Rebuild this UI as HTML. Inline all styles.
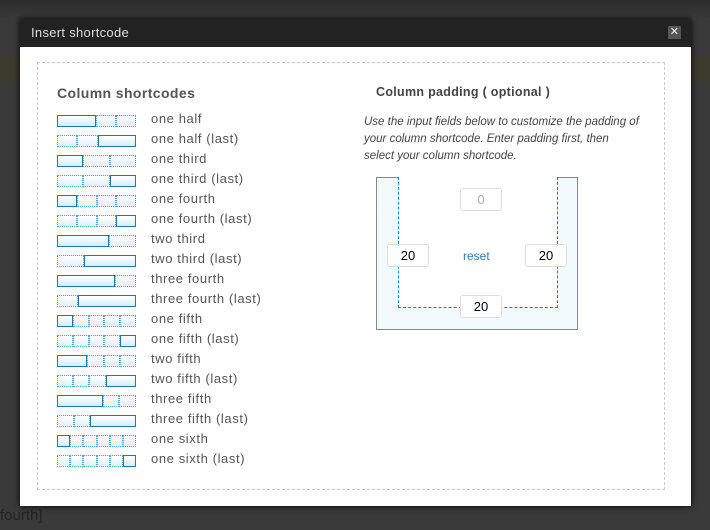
<!DOCTYPE html><html><head><style>
body{margin:0;width:710px;height:530px;background:#3a3a3a;position:relative;overflow:hidden;font-family:"Liberation Sans",sans-serif}
.bg{position:absolute;color:#222;font-size:15px}
#m{position:absolute;left:20px;top:19px;width:671px;height:487px;background:#fff;box-shadow:0 0 6px #000}
#t{height:28px;background:#222;color:#ddd;font-size:13px;line-height:28px;padding-left:11px;letter-spacing:.3px}
#x{position:absolute;right:10px;top:7px;width:13px;height:13px;background:#555;color:#eee;font-size:11px;line-height:13px;text-align:center}
#d{position:absolute;left:17px;top:43px;width:626px;height:426px;border:1px dashed #ccc}
h3{position:absolute;margin:0;font-size:14px;color:#555;font-weight:bold;letter-spacing:.4px}
.row{position:absolute;left:37px;height:12px;width:79px;display:flex;margin-top:1px}
.row div{box-sizing:border-box;height:12px;border:1px dotted #5aa0c8;background:linear-gradient(#fff,#dff1fb)}
.row div.f{border:1px solid #1a7ab0;background:linear-gradient(#fff,#d4edfa)}
.lb{position:absolute;left:131px;font-size:13px;color:#555;letter-spacing:.6px}
#p{position:absolute;left:356px;top:158px;width:200px;height:151px;border:1px solid #888;background:#f1fbfe}
#in{position:absolute;left:21px;top:-1px;width:158px;height:130px;border:1px dashed #0a78c0;border-top:none;background:#fff}
.i{position:absolute;width:40px;height:21px;border:1px solid #ddd;border-radius:3px;background:#fff;font-size:13px;text-align:center;line-height:21px;color:#000}
</style></head><body>
<div class="bg" style="left:0;top:0;width:710px;height:19px;background:linear-gradient(#2c2c2c,#3a3a3a)"></div>
<div class="bg" style="left:0;top:55px;width:20px;height:26px;background:#3b3b2e"></div>
<div class="bg" style="left:691px;top:55px;width:19px;height:26px;background:#3b3b2e"></div>
<div class="bg" style="left:0;top:507px">fourth]</div>
<div id="m">
<div id="t">Insert shortcode<div id="x">✕</div></div>
<div id="d"></div>
<h3 style="left:37px;top:66px">Column shortcodes</h3>
<div class="row" style="top:95px"><div class="f" style="flex:2"></div><div style="flex:1"></div><div style="flex:1"></div></div><div class="lb" style="top:92px">one half</div>
<div class="row" style="top:115px"><div style="flex:1"></div><div style="flex:1"></div><div class="f" style="flex:2"></div></div><div class="lb" style="top:112px">one half (last)</div>
<div class="row" style="top:135px"><div class="f" style="flex:1"></div><div style="flex:1"></div><div style="flex:1"></div></div><div class="lb" style="top:132px">one third</div>
<div class="row" style="top:155px"><div style="flex:1"></div><div style="flex:1"></div><div class="f" style="flex:1"></div></div><div class="lb" style="top:152px">one third (last)</div>
<div class="row" style="top:175px"><div class="f" style="flex:1"></div><div style="flex:1"></div><div style="flex:1"></div><div style="flex:1"></div></div><div class="lb" style="top:172px">one fourth</div>
<div class="row" style="top:195px"><div style="flex:1"></div><div style="flex:1"></div><div style="flex:1"></div><div class="f" style="flex:1"></div></div><div class="lb" style="top:192px">one fourth (last)</div>
<div class="row" style="top:215px"><div class="f" style="flex:2"></div><div style="flex:1"></div></div><div class="lb" style="top:212px">two third</div>
<div class="row" style="top:235px"><div style="flex:1"></div><div class="f" style="flex:2"></div></div><div class="lb" style="top:232px">two third (last)</div>
<div class="row" style="top:255px"><div class="f" style="flex:3"></div><div style="flex:1"></div></div><div class="lb" style="top:252px">three fourth</div>
<div class="row" style="top:275px"><div style="flex:1"></div><div class="f" style="flex:3"></div></div><div class="lb" style="top:272px">three fourth (last)</div>
<div class="row" style="top:295px"><div class="f" style="flex:1"></div><div style="flex:1"></div><div style="flex:1"></div><div style="flex:1"></div><div style="flex:1"></div></div><div class="lb" style="top:292px">one fifth</div>
<div class="row" style="top:315px"><div style="flex:1"></div><div style="flex:1"></div><div style="flex:1"></div><div style="flex:1"></div><div class="f" style="flex:1"></div></div><div class="lb" style="top:312px">one fifth (last)</div>
<div class="row" style="top:335px"><div class="f" style="flex:2"></div><div style="flex:1"></div><div style="flex:1"></div><div style="flex:1"></div></div><div class="lb" style="top:332px">two fifth</div>
<div class="row" style="top:355px"><div style="flex:1"></div><div style="flex:1"></div><div style="flex:1"></div><div class="f" style="flex:2"></div></div><div class="lb" style="top:352px">two fifth (last)</div>
<div class="row" style="top:375px"><div class="f" style="flex:3"></div><div style="flex:1"></div><div style="flex:1"></div></div><div class="lb" style="top:372px">three fifth</div>
<div class="row" style="top:395px"><div style="flex:1"></div><div style="flex:1"></div><div class="f" style="flex:3"></div></div><div class="lb" style="top:392px">three fifth (last)</div>
<div class="row" style="top:415px"><div class="f" style="flex:1"></div><div style="flex:1"></div><div style="flex:1"></div><div style="flex:1"></div><div style="flex:1"></div><div style="flex:1"></div></div><div class="lb" style="top:412px">one sixth</div>
<div class="row" style="top:435px"><div style="flex:1"></div><div style="flex:1"></div><div style="flex:1"></div><div style="flex:1"></div><div style="flex:1"></div><div class="f" style="flex:1"></div></div><div class="lb" style="top:432px">one sixth (last)</div>
<h3 style="left:356px;top:66px;font-size:12.5px;color:#444;letter-spacing:.3px">Column padding ( optional )</h3>
<div style="position:absolute;left:344px;top:95px;width:278px;font-size:11.5px;font-style:italic;color:#444;line-height:17px">Use the input fields below to customize the padding of your column shortcode. Enter padding first, then select your column shortcode.</div>
<div id="p"><div id="in"></div>
<div class="i" style="left:83px;top:10px;color:#aaa">0</div>
<div class="i" style="left:10px;top:66px">20</div>
<div class="i" style="left:148px;top:66px">20</div>
<div class="i" style="left:83px;top:117px">20</div>
<div style="position:absolute;left:86px;top:71px;font-size:12px;color:#2b7bb0">reset</div>
</div>
</div>
</body></html>
